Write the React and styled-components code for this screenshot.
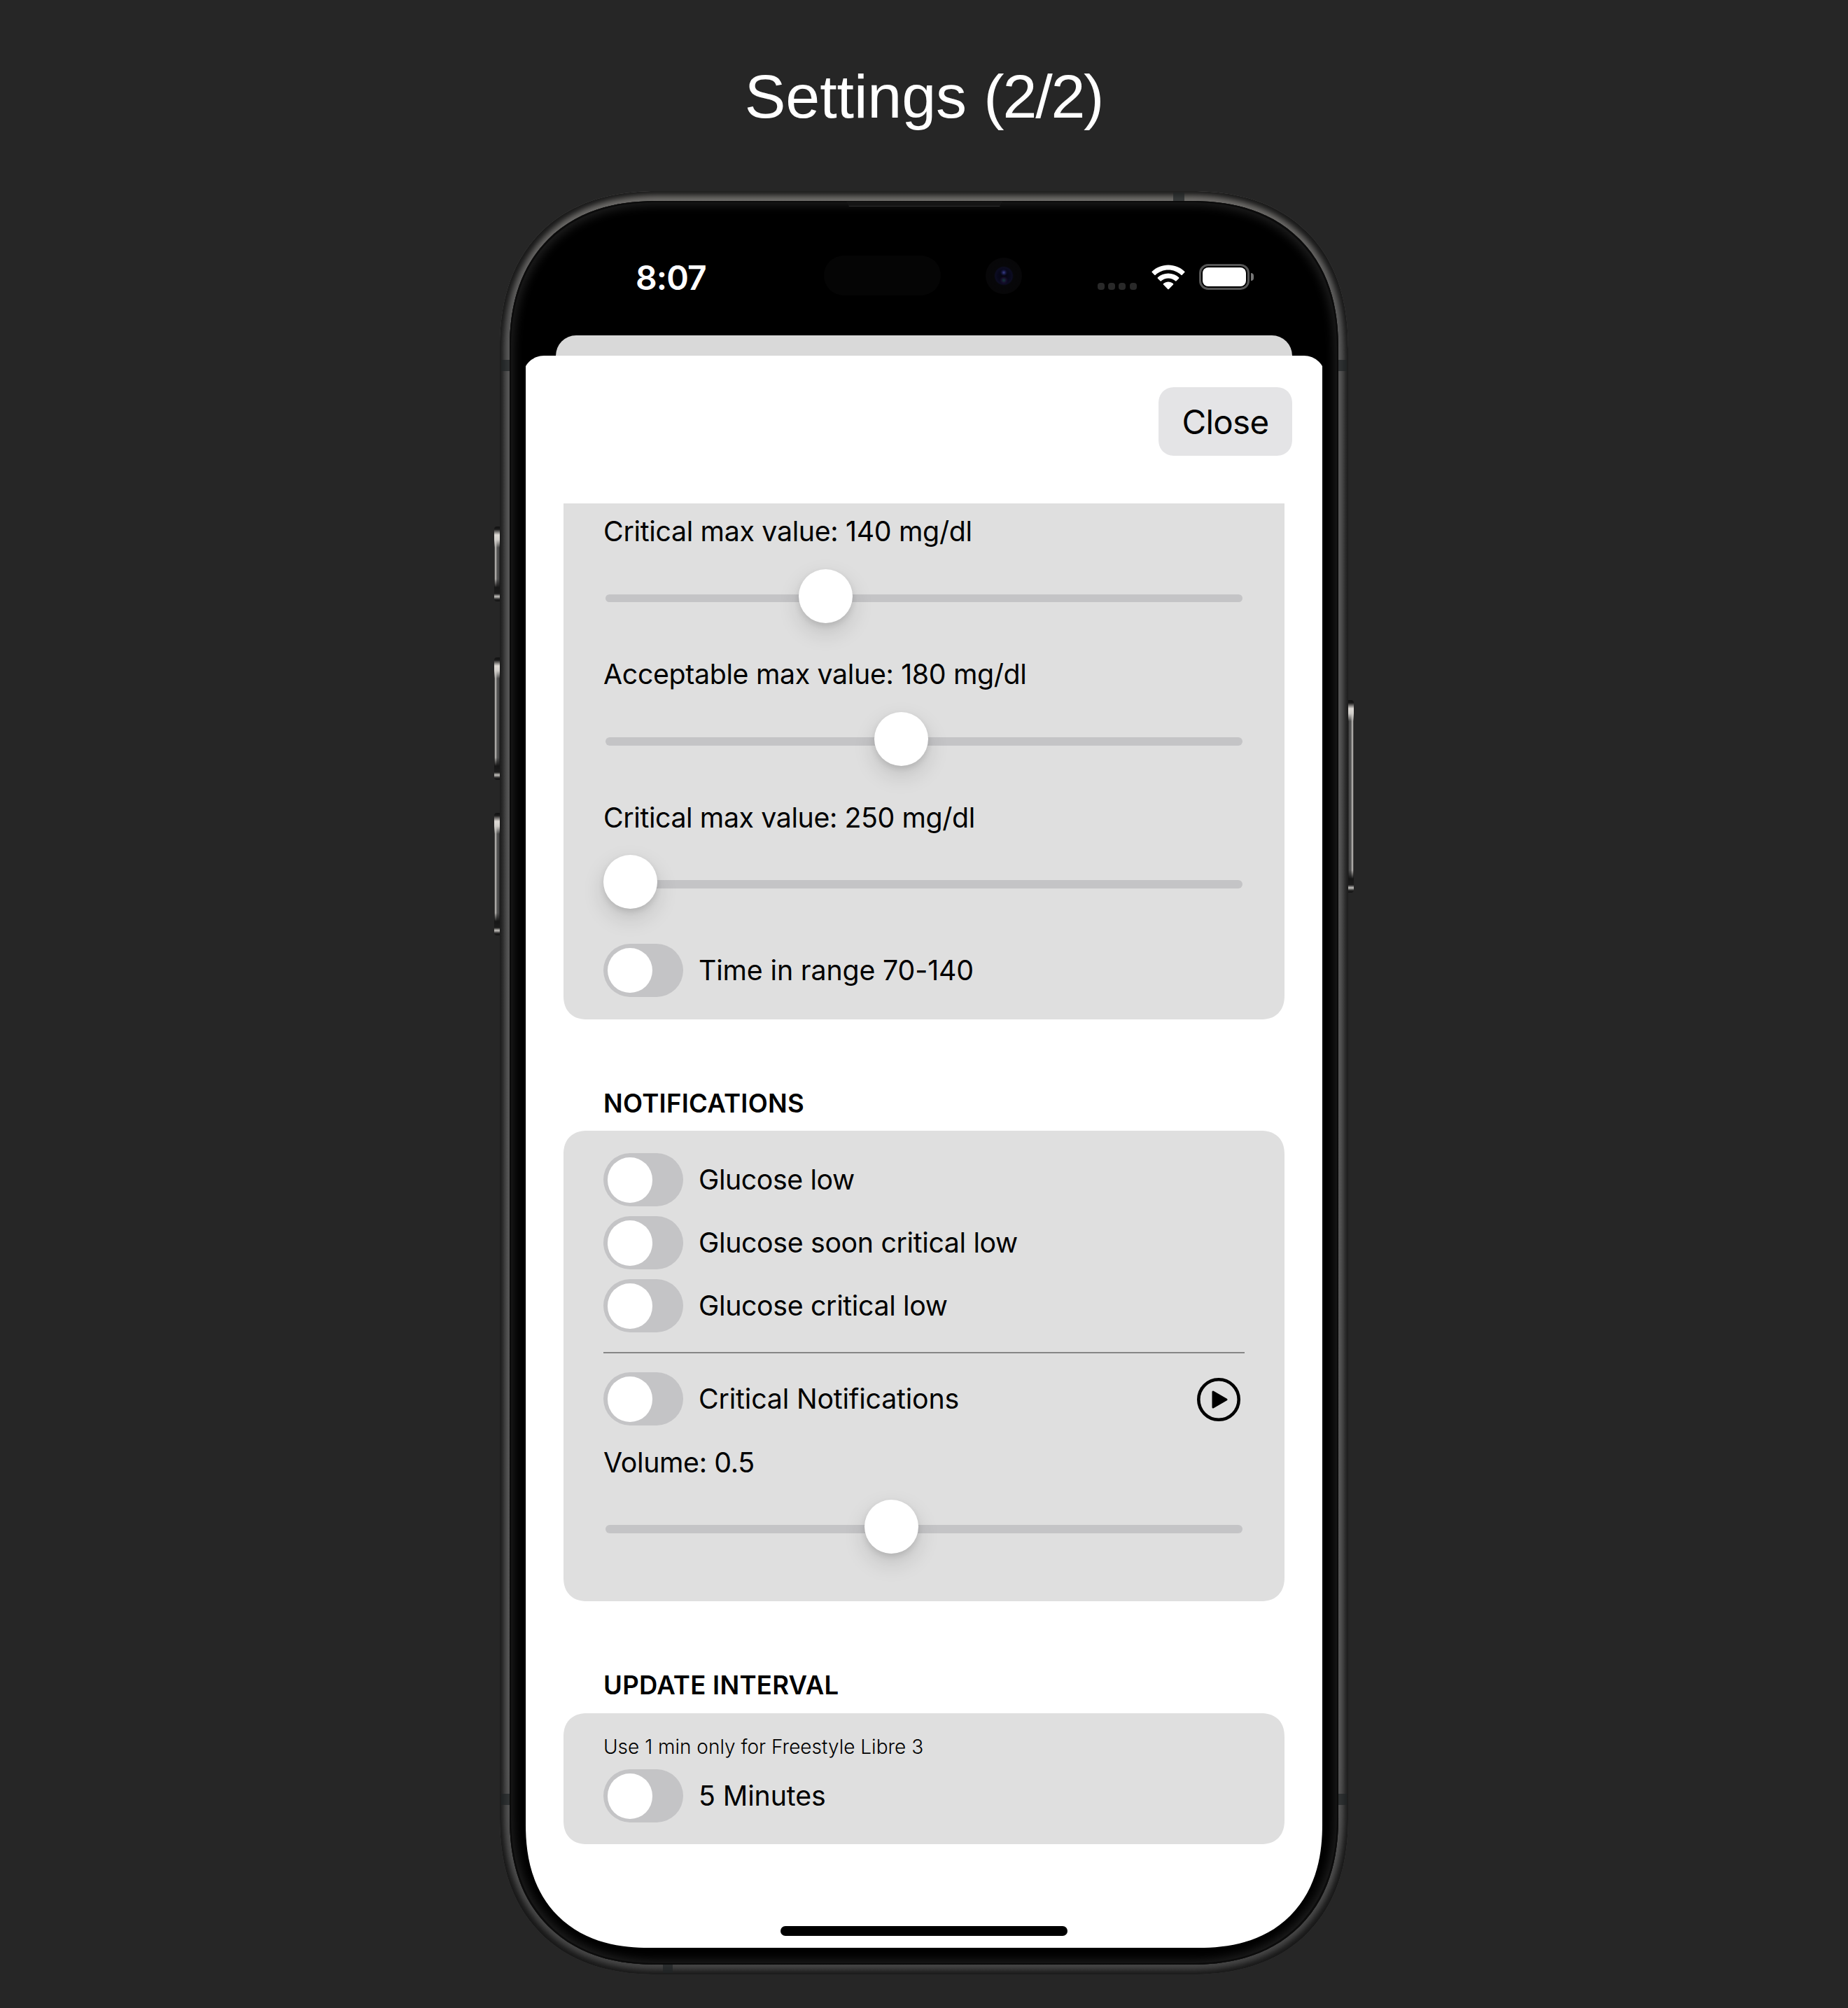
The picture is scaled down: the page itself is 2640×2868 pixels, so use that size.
import React from "react";
import styled, { createGlobalStyle, css } from "styled-components";

const GlobalStyle = createGlobalStyle`
  * { box-sizing: border-box; }
  html, body { margin: 0; background: #262626; }
  body { font-family: Inter, "Liberation Sans", sans-serif; color: #000; }
`;

/* Continuous-curvature corners, falling back to circular ones. */
const corners = (round, smooth) => css`
  border-radius: ${round};
  @supports (corner-shape: superellipse(1.2)) {
    border-radius: ${smooth};
    corner-shape: superellipse(1.2);
  }
`;

const Page = styled.main`
  width: 2640px;
  height: 2868px;
  display: flex;
  flex-direction: column;
  align-items: center;
  background: #262626;
  overflow: hidden;
`;

const Title = styled.h1`
  margin: 0;
  height: 273px;
  padding: 88px 1px 0 0;
  font: 400 88px/100px "Liberation Sans", Arial, sans-serif;
  color: #fff;
  white-space: nowrap;
`;

const TitlePart = styled.span`
  letter-spacing: ${(p) => p.$tracking}px;
`;

/* ---------- device ---------- */

const Phone = styled.div`
  position: relative;
  flex: none;
  width: 1212px;
  height: 2547px;
  padding: 14px;
  ${corners("200px", "225px")}
  background: linear-gradient(#716f6c 0, #5a5a5a 200px, #585858 2250px, #454545 100%);
  box-shadow: inset 0 0 8px 6px #171717;
`;

const Bezel = styled.div`
  position: relative;
  height: 100%;
  padding: 28px 23px 24px;
  ${corners("186px", "211px")}
  background: #000;
  box-shadow: inset 0 0 0 2px #0b0b0b, inset 0 0 14px 6px #1e1e1e;
`;

const Screen = styled.div`
  position: relative;
  height: 100%;
  display: flex;
  flex-direction: column;
  ${corners("0 0 157px 157px", "0 0 176px 176px")}
  overflow: hidden;
`;

const SideButton = styled.span`
  position: absolute;
  top: ${(p) => p.$top}px;
  ${(p) => (p.$side === "left" ? "left: -8px;" : "right: -8px;")}
  width: 8px;
  height: ${(p) => p.$length}px;
  border-radius: ${(p) => (p.$side === "left" ? "4px 0 0 4px" : "0 4px 4px 0")};
  background: linear-gradient(
    #111 0, #1a1a1a 4px, #dedad5 12px, #cfccc8 19px, transparent 30px,
    transparent calc(100% - 32px), #161616 calc(100% - 20px), #1c1c1c calc(100% - 11px),
    #c4c2be calc(100% - 7px), #222 calc(100% - 3px), #111 100%
  ),
  linear-gradient(
    to ${(p) => (p.$side === "left" ? "right" : "left")},
    #161616 0, #aaa8a5 1.5px, #a8a6a3 2.5px, #555 4px, #484848 7px, #161616 8px
  );
`;

const Antenna = styled.span`
  position: absolute;
  background: rgba(32, 35, 37, 0.7);
  ${(p) => p.$edge === "left" && `left: 2px; top: ${p.$at}px; width: 12px; height: 16px;`}
  ${(p) => p.$edge === "right" && `right: 2px; top: ${p.$at}px; width: 12px; height: 16px;`}
  ${(p) => p.$edge === "top" && `top: 2px; left: ${p.$at}px; width: 16px; height: 12px;`}
  ${(p) => p.$edge === "bottom" && `bottom: 2px; left: ${p.$at}px; width: 14px; height: 12px;`}
`;

const Speaker = styled.span`
  position: absolute;
  top: 1px;
  left: 481px;
  width: 223px;
  height: 7px;
  background: #151515;
  border-bottom: 1px solid #2c2c2c;
  clip-path: polygon(0 0, 100% 0, calc(100% - 4px) 100%, 4px 100%);
`;

/* ---------- status bar ---------- */

const StatusBar = styled.header`
  flex: none;
  height: 164px;
  padding: 0 97px 3px 157px;
  display: flex;
  align-items: center;
`;

const Clock = styled.time`
  width: 269px;
  padding-top: 2px;
  font-size: 48px;
  font-weight: 600;
  line-height: 58px;
  letter-spacing: -0.9px;
  color: #fff;
`;

const Island = styled.div`
  width: 167px;
  height: 57px;
  margin-bottom: 4px;
  border-radius: 29px;
  background: #050505;
`;

const Camera = styled.div`
  width: 52px;
  height: 52px;
  margin: 0 0 4px 64px;
  border-radius: 50%;
  background:
    radial-gradient(circle at 50% 41%, #3a3f8c 0, rgba(30, 32, 90, 0.5) 3px, transparent 5px),
    radial-gradient(circle at 50% 62%, #14383c 0, rgba(30, 12, 50, 0.6) 4px, transparent 6px),
    radial-gradient(circle, #04040c 0, #08081c 9px, #0c0c22 12px, #070709 14px, #070607 100%);
`;

const StatusIcons = styled.div`
  margin-left: auto;
  display: flex;
  align-items: center;
`;

const SignalDots = styled.div`
  display: flex;
  gap: 5.5px;
  margin: 26px 21px 0 0;
`;

const Dot = styled.i`
  width: 9.8px;
  height: 10px;
  border-radius: 4px;
  background: #292929;
`;

const WifiIcon = styled.svg`
  width: 48px;
  height: 36px;
  margin-right: 20px;
  display: block;
`;

const Battery = styled.div`
  width: 72px;
  height: 37px;
  padding: 2px;
  border: 3.5px solid #555;
  border-radius: 13px;
`;

const Charge = styled.div`
  height: 100%;
  border-radius: 8px;
  background: #fff;
`;

const BatteryTip = styled.div`
  width: 4.5px;
  height: 11px;
  margin: 0 1px 0 2px;
  border-radius: 0 5px 5px 0;
  background: #777;
`;

/* ---------- sheet ---------- */

const BackSheet = styled.div`
  flex: none;
  height: 29px;
  margin: 0 43px;
  border-radius: 30px 30px 0 0;
  background: #d9d9d9;
`;

const Sheet = styled.section`
  flex: 1;
  margin: 0 -4px;
  padding: 0 58px;
  border-radius: 30px 30px 0 0;
  background: #fff;
`;

const SheetHeader = styled.div`
  height: 211px;
  padding-top: 45px;
  margin-right: -11px;
  display: flex;
  justify-content: flex-end;
  align-items: flex-start;
`;

const CloseButton = styled.button`
  width: 191px;
  height: 98px;
  padding: 1px 0 0;
  border: 0;
  ${corners("21px", "24px")}
  background: #e4e4e6;
  font: 400 47.5px/58px Inter, "Liberation Sans", sans-serif;
  letter-spacing: -0.7px;
  color: #000;
`;

const Card = styled.div`
  padding: ${(p) => p.$pad};
  ${(p) => (p.$scrolled ? corners("0 0 30px 30px", "0 0 34px 34px") : corners("30px", "34px"))}
  background: #dfdfdf;
`;

const SectionTitle = styled.h2`
  margin: 98.5px 57px ${(p) => p.$gap}px;
  font-size: 36.5px;
  font-weight: 600;
  line-height: 44px;
  letter-spacing: 0.28px;
`;

const Label = styled.div`
  font-size: 39.3px;
  line-height: 48px;
  letter-spacing: ${(p) => p.$tracking ?? -0.35}px;
  white-space: nowrap;
`;

const Field = styled.div`
  height: 204.3px;
`;

const SliderBox = styled.div`
  position: relative;
  height: 77px;
  margin-top: 29.6px;
  padding: 36px 3px 0;
`;

const Track = styled.div`
  height: 11.5px;
  border-radius: 6px;
  background: #c4c4c6;
`;

const Thumb = styled.div`
  position: absolute;
  top: 0;
  left: ${(p) => p.$x}px;
  width: 77px;
  height: 77px;
  border-radius: 50%;
  background: #fff;
  box-shadow: 0 13px 32px rgba(0, 0, 0, 0.14), 0 4px 9px rgba(0, 0, 0, 0.1);
`;

const Rows = styled.div`
  display: flex;
  flex-direction: column;
  gap: 14px;
`;

const Row = styled.div`
  height: 76px;
  display: flex;
  align-items: center;
  gap: 22px;
`;

const RowLabel = styled(Label)`
  flex: 1;
`;

const Switch = styled.div`
  flex: none;
  width: 114px;
  height: 76px;
  padding: 5.7px;
  border-radius: 38px;
  background: #c4c4c6;
  display: flex;
`;

const Knob = styled.div`
  width: 64.6px;
  height: 64.6px;
  border-radius: 50%;
  background: #fff;
`;

const Divider = styled.div`
  height: 1.5px;
  margin: 28px 0 27.5px;
  background: #868686;
`;

const PlayIcon = styled.svg`
  width: 62px;
  height: 62px;
  margin: 2px 6px 0 0;
`;

const Spacer = styled.div`
  height: 28.4px;
`;

const Note = styled.div`
  margin-bottom: 15px;
  font-size: 28px;
  font-weight: 300;
  line-height: 34px;
`;

const HomeIndicator = styled.div`
  position: absolute;
  bottom: 17px;
  left: 50%;
  width: 410px;
  height: 14.5px;
  transform: translateX(-50%);
  border-radius: 8px;
  background: #000;
`;

const SliderField = ({ label, x, tracking }) => (
  <Field>
    <Label $tracking={tracking}>{label}</Label>
    <SliderBox>
      <Track />
      <Thumb $x={x} />
    </SliderBox>
  </Field>
);

const ToggleRow = ({ label, tracking, children }) => (
  <Row>
    <Switch role="switch" aria-checked="false">
      <Knob />
    </Switch>
    <RowLabel $tracking={tracking}>{label}</RowLabel>
    {children}
  </Row>
);

export default function App() {
  return (
    <Page>
      <GlobalStyle />
      <Title>
        <TitlePart $tracking={-0.1}>Settings </TitlePart>
        <TitlePart $tracking={-2.2}>(2/2)</TitlePart>
      </Title>
      <Phone>
        <SideButton $side="left" $top={479} $length={107} />
        <SideButton $side="left" $top={666} $length={175} />
        <SideButton $side="left" $top={888} $length={175} />
        <SideButton $side="right" $top={727} $length={275} />
        <Antenna $edge="top" $at={962} />
        <Antenna $edge="left" $at={241} />
        <Antenna $edge="right" $at={241} />
        <Antenna $edge="left" $at={2289} />
        <Antenna $edge="right" $at={2289} />
        <Antenna $edge="bottom" $at={233} />
        <Bezel>
          <Speaker />
          <Screen>
            <StatusBar>
              <Clock>8:07</Clock>
              <Island />
              <Camera />
              <StatusIcons>
                <SignalDots>
                  <Dot />
                  <Dot />
                  <Dot />
                  <Dot />
                </SignalDots>
                <WifiIcon viewBox="0 0 48 36" fill="#fff">
                  <path d="M24 .5C33 .5 41.200 4 47.300 9.700q.7.7 0 1.400L43.700 14.700q-.7.7-1.400 0C37.500 10.200 31 7.500 24 7.500S10.500 10.200 5.700 14.700q-.7.7-1.400 0L.7 11.100q-.7-.7 0-1.400C6.800 4 15 .5 24 .5z" />
                  <path d="M24 12.500c5.800 0 11.100 2.200 15.100 5.800q.7.700 0 1.400l-3.600 3.600q-.7.700-1.400 0C31.400 21 27.900 19.500 24 19.500s-7.400 1.500-10.100 3.800q-.7.700-1.400 0L8.900 19.700q-.7-.7 0-1.400c4-3.600 9.300-5.800 15.100-5.800z" />
                  <path d="M24 24.500c2.600 0 5 .9 6.900 2.400q.8.700.1 1.500L24.700 35q-.7.700-1.400 0L17 28.400q-.7-.8.1-1.500c1.900-1.500 4.300-2.400 6.900-2.400z" />
                </WifiIcon>
                <Battery>
                  <Charge />
                </Battery>
                <BatteryTip />
              </StatusIcons>
            </StatusBar>
            <BackSheet />
            <Sheet>
              <SheetHeader>
                <CloseButton>Close</CloseButton>
              </SheetHeader>
              <Card $scrolled $pad="16.2px 57px 31.5px">
                <SliderField label="Critical max value: 140 mg/dl" x={278.5} tracking={-0.32} />
                <SliderField label="Acceptable max value: 180 mg/dl" x={386.5} tracking={-0.34} />
                <SliderField label="Critical max value: 250 mg/dl" x={0} tracking={-0.4} />
                <ToggleRow label="Time in range 70-140" tracking={-0.15} />
              </Card>
              <SectionTitle $gap={17.3}>NOTIFICATIONS</SectionTitle>
              <Card $pad="32px 57px 17.6px">
                <Rows>
                  <ToggleRow label="Glucose low" tracking={-0.42} />
                  <ToggleRow label="Glucose soon critical low" />
                  <ToggleRow label="Glucose critical low" />
                </Rows>
                <Divider />
                <ToggleRow label="Critical Notifications" tracking={-0.17}>
                  <PlayIcon viewBox="0 0 62 62">
                    <circle cx="31" cy="31" r="28.700" fill="none" stroke="#000" strokeWidth="4.600" />
                    <path d="M23 20v22L42 31z" fill="#000" stroke="#000" strokeWidth="3" strokeLinejoin="round" />
                  </PlayIcon>
                </ToggleRow>
                <Spacer />
                <SliderField label="Volume: 0.5" x={372.8} />
              </Card>
              <SectionTitle $gap={17.7}>UPDATE INTERVAL</SectionTitle>
              <Card $pad="31.5px 57px 31px">
                <Note>Use 1 min only for Freestyle Libre 3</Note>
                <ToggleRow label="5 Minutes" tracking={-0.1} />
              </Card>
            </Sheet>
            <HomeIndicator />
          </Screen>
        </Bezel>
      </Phone>
    </Page>
  );
}
